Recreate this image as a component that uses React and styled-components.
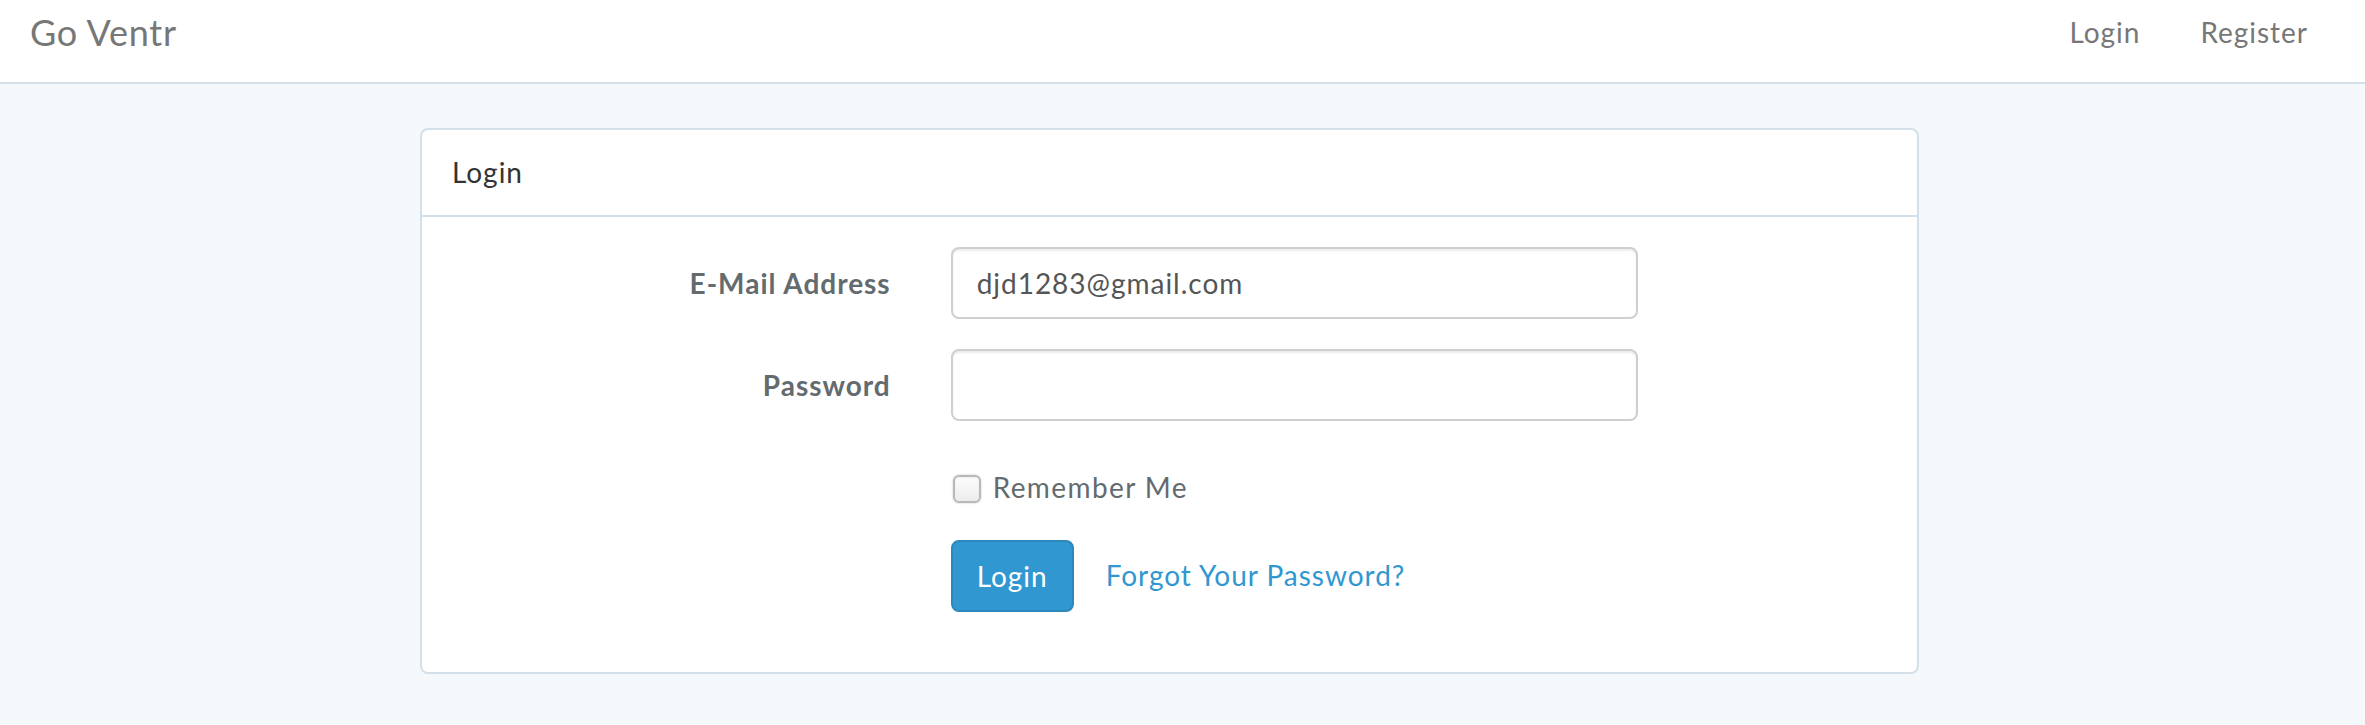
import styled, { createGlobalStyle } from "styled-components"

const GlobalStyle = createGlobalStyle`
    html, body {
        margin: 0;
        padding: 0;
    }
    body {
        background-color: #f5f8fa;
        font-family: Lato, "Open Sans", "DejaVu Sans", sans-serif;
        font-size: 28px;
        line-height: 1.6;
        color: #636b6f;
        letter-spacing: 0.035em;
    }
    * {
        box-sizing: border-box;
    }
`

const Navbar = styled.nav`
    height: 84px;
    background-color: #fff;
    border-bottom: 2px solid #d3e0e9;
    display: flex;
    align-items: center;
    justify-content: space-between;
    padding: 0 27px 18px 0;
`

const Brand = styled.a`
    padding-left: 30px;
    font-size: 36px;
    line-height: 40px;
    color: #777;
    text-decoration: none;
    letter-spacing: 0.02em;
`

const NavLinks = styled.ul`
    display: flex;
    list-style: none;
    margin: 0;
    padding: 0;
`

const NavLink = styled.a`
    display: block;
    padding: 0 30px;
    line-height: 40px;
    color: #777;
    text-decoration: none;
`

const Main = styled.main`
    padding: 44px 0 0 420px;
`

const Panel = styled.div`
    width: 1499px;
    background-color: #fff;
    border: 2px solid #d3e0e9;
    border-radius: 8px;
`

const PanelHeading = styled.div`
    padding: 20px 30px;
    border-bottom: 2px solid #d3e0e9;
    color: #333;
    line-height: 44.8px;
`

const PanelBody = styled.div`
    padding: 30px;
`

const FormGroup = styled.div`
    display: grid;
    grid-template-columns: 438.67px 687px;
    column-gap: 60px;
    margin-bottom: 30px;
`

const Label = styled.label`
    padding-top: 14px;
    text-align: right;
    font-weight: 700;
    line-height: 44.8px;
`

const Input = styled.input`
    display: block;
    width: 100%;
    height: 72px;
    padding: 12px 24px;
    font: inherit;
    letter-spacing: inherit;
    color: #555;
    background-color: #fff;
    border: 2px solid #ccd0d2;
    border-radius: 8px;
    box-shadow: inset 0 2px 2px rgba(0, 0, 0, 0.075);
    outline: none;
`

const Field = styled.div`
    grid-column: ${props => props.col || "auto"};
`

const CheckLabel = styled.label`
    display: flex;
    align-items: center;
    padding-top: 14px;
    line-height: 44.8px;
    letter-spacing: 0.05em;
    cursor: pointer;
`

const CheckBox = styled.span`
    width: 28px;
    height: 28px;
    margin: 4px 12px 0 2px;
    border: 2px solid #b9b9b9;
    border-radius: 6px;
    background: linear-gradient(#fdfdfd, #ececec);
    box-shadow: 0 0 2px rgba(0, 0, 0, 0.25), inset 0 1px 2px rgba(0, 0, 0, 0.06);
    flex-shrink: 0;
`

const Actions = styled.div`
    display: flex;
    align-items: center;
    gap: 6px;
`

const Button = styled.button`
    height: 72px;
    padding: 12px 24px;
    font: inherit;
    letter-spacing: inherit;
    line-height: 44.8px;
    color: #fff;
    background-color: #3097d1;
    border: 2px solid #2a88bd;
    border-radius: 8px;
    cursor: pointer;
`

const LinkButton = styled.a`
    padding: 12px 26px;
    color: #3097d1;
    text-decoration: none;
    line-height: 44.8px;
`

const App = () => {
    return (
        <>
            <GlobalStyle />
            <Navbar>
                <Brand href="#">Go Ventr</Brand>
                <NavLinks>
                    <li><NavLink href="#">Login</NavLink></li>
                    <li><NavLink href="#">Register</NavLink></li>
                </NavLinks>
            </Navbar>
            <Main>
                <Panel>
                    <PanelHeading>Login</PanelHeading>
                    <PanelBody>
                        <FormGroup>
                            <Label htmlFor="email">E-Mail Address</Label>
                            <Input id="email" type="email" defaultValue="djd1283@gmail.com" />
                        </FormGroup>
                        <FormGroup>
                            <Label htmlFor="password">Password</Label>
                            <Input id="password" type="password" />
                        </FormGroup>
                        <FormGroup>
                            <Field col="2">
                                <CheckLabel>
                                    <CheckBox />
                                    Remember Me
                                </CheckLabel>
                            </Field>
                        </FormGroup>
                        <FormGroup>
                            <Field col="2">
                                <Actions>
                                    <Button type="submit">Login</Button>
                                    <LinkButton href="#">Forgot Your Password?</LinkButton>
                                </Actions>
                            </Field>
                        </FormGroup>
                    </PanelBody>
                </Panel>
            </Main>
        </>
    )
}

export default App
